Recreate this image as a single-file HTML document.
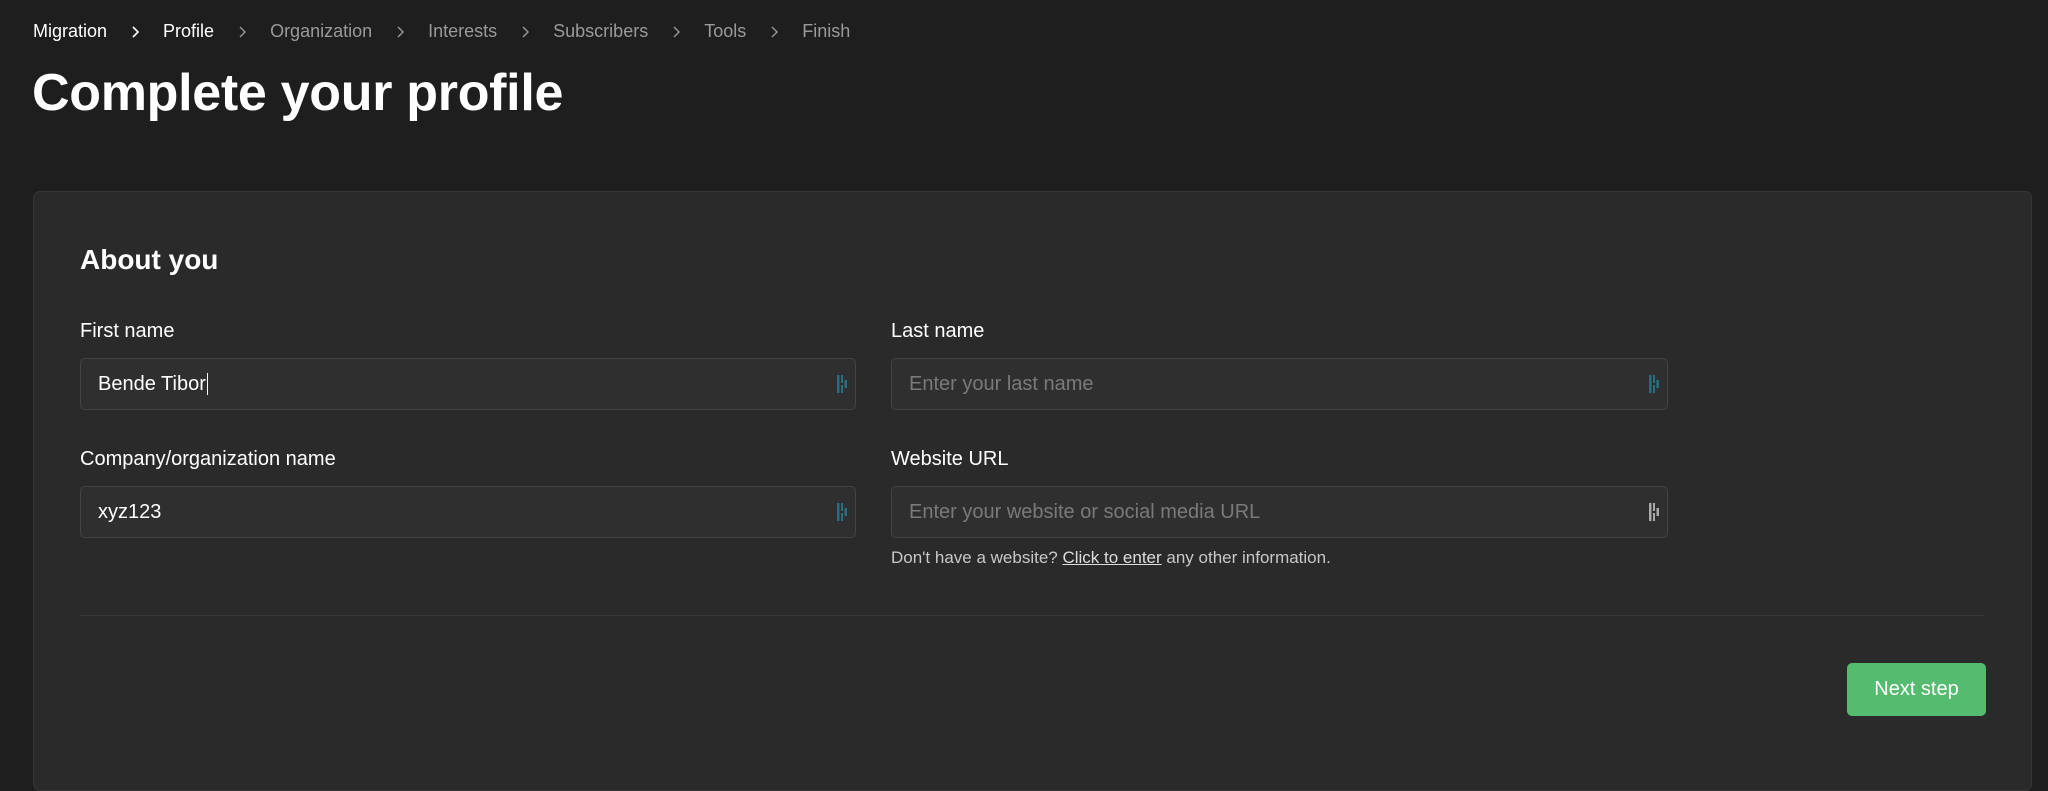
<!DOCTYPE html>
<html><head><meta charset="utf-8"><style>
*{box-sizing:border-box;margin:0;padding:0}
body{width:2048px;height:755px;overflow:hidden;background:#1e1e1e;font-family:"Liberation Sans",sans-serif;color:#fff;position:relative}
.bc{position:absolute;left:33px;top:21px;font-size:18px;display:flex;align-items:center;color:#9a9a9a}
.bc span{margin-right:24px}
.bc svg{margin-right:24px}
.bc .a{color:#fff}
h1{position:absolute;left:32px;top:63px;font-size:52px;font-weight:bold;letter-spacing:-0.3px}
.card{position:absolute;left:33px;top:191px;width:1999px;height:600px;background:#2a2a2a;border:1px solid #363636;border-radius:7px}
h2{position:absolute;left:80px;top:244px;font-size:28px;font-weight:bold}
.lbl{position:absolute;font-size:20px;color:#fff}
.inp{position:absolute;height:52px;background:#2f2f2f;border:1.5px solid #444;border-radius:5px;font-size:20px;padding-left:17px;line-height:50px;color:#fff}
.inp.ph{color:#7a7a7a}
.ic{position:absolute;right:7px;top:15px;width:12px;height:20px}
.help{position:absolute;left:891px;top:548px;font-size:17px;color:#c8c8c8}
.help u{color:#ddd}
.hr{position:absolute;left:80px;top:615px;width:1904px;height:1px;background:#383838}
.btn{position:absolute;left:1847px;top:663px;width:139px;height:53px;background:#55bb6e;border-radius:5px;font-size:20px;text-align:center;line-height:53px;color:#fff}
</style></head><body>
<div class="bc"><span class="a">Migration</span><svg width="8" height="12" viewBox="0 0 8 12"><path d="M2 1l5 5-5 5" fill="none" stroke="#fff" stroke-width="1.6"/></svg><span class="a">Profile</span><svg width="8" height="12" viewBox="0 0 8 12"><path d="M2 1l5 5-5 5" fill="none" stroke="#999" stroke-width="1.4"/></svg><span>Organization</span><svg width="8" height="12" viewBox="0 0 8 12"><path d="M2 1l5 5-5 5" fill="none" stroke="#999" stroke-width="1.4"/></svg><span>Interests</span><svg width="8" height="12" viewBox="0 0 8 12"><path d="M2 1l5 5-5 5" fill="none" stroke="#999" stroke-width="1.4"/></svg><span>Subscribers</span><svg width="8" height="12" viewBox="0 0 8 12"><path d="M2 1l5 5-5 5" fill="none" stroke="#999" stroke-width="1.4"/></svg><span>Tools</span><svg width="8" height="12" viewBox="0 0 8 12"><path d="M2 1l5 5-5 5" fill="none" stroke="#999" stroke-width="1.4"/></svg><span>Finish</span></div>
<h1>Complete your profile</h1>
<div class="card"></div>
<h2>About you</h2>
<div class="lbl" style="left:80px;top:320px">First name</div>
<div class="lbl" style="left:891px;top:320px">Last name</div>
<div class="inp" style="left:80px;top:358px;width:776px">Bende Tibor<span style="border-left:1.5px solid #fff;margin-left:1px"></span><svg class="ic" viewBox="0 0 12 20"><rect x="1" y="1" width="2.5" height="18" fill="#2a6f80"/><rect x="5" y="1" width="2" height="8" fill="#2a6f80"/><rect x="5" y="11" width="2" height="8" fill="#2a6f80"/><rect x="8.5" y="6" width="2.5" height="8" fill="#2a6f80"/></svg></div>
<div class="inp ph" style="left:891px;top:358px;width:777px">Enter your last name<svg class="ic" viewBox="0 0 12 20"><rect x="1" y="1" width="2.5" height="18" fill="#2a6f80"/><rect x="5" y="1" width="2" height="8" fill="#2a6f80"/><rect x="5" y="11" width="2" height="8" fill="#2a6f80"/><rect x="8.5" y="6" width="2.5" height="8" fill="#2a6f80"/></svg></div>
<div class="lbl" style="left:80px;top:448px">Company/organization name</div>
<div class="lbl" style="left:891px;top:448px">Website URL</div>
<div class="inp" style="left:80px;top:486px;width:776px">xyz123<svg class="ic" viewBox="0 0 12 20"><rect x="1" y="1" width="2.5" height="18" fill="#2a6f80"/><rect x="5" y="1" width="2" height="8" fill="#2a6f80"/><rect x="5" y="11" width="2" height="8" fill="#2a6f80"/><rect x="8.5" y="6" width="2.5" height="8" fill="#2a6f80"/></svg></div>
<div class="inp ph" style="left:891px;top:486px;width:777px">Enter your website or social media URL<svg class="ic" viewBox="0 0 12 20"><rect x="1" y="1" width="2.5" height="18" fill="#aaa"/><rect x="5" y="1" width="2" height="8" fill="#aaa"/><rect x="5" y="11" width="2" height="8" fill="#aaa"/><rect x="8.5" y="6" width="2.5" height="8" fill="#aaa"/></svg></div>
<div class="help">Don't have a website? <u>Click to enter</u> any other information.</div>
<div class="hr"></div>
<div class="btn">Next step</div>
</body></html>
